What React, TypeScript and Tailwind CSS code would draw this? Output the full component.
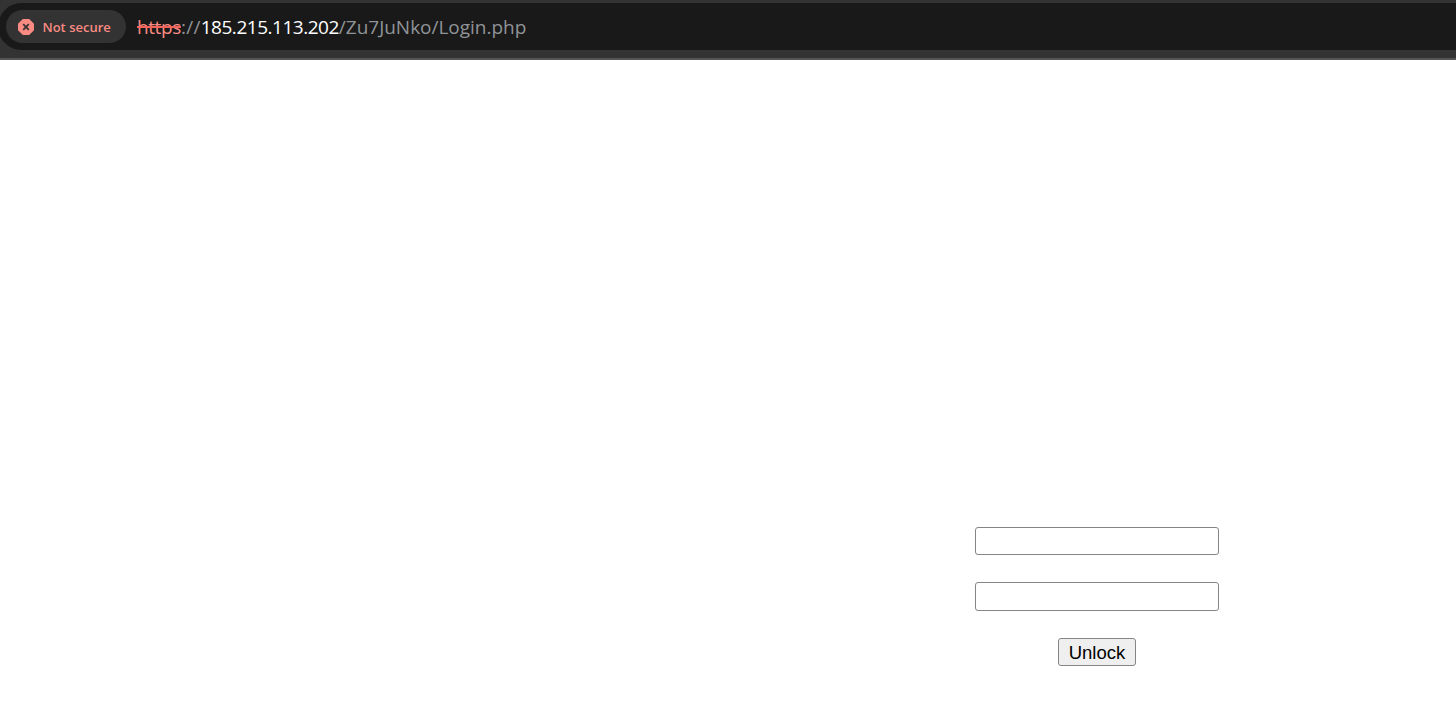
import React from 'react';

const AddressBar = () => {
  return (
    <div className="h-[60px] bg-[#333333] border-b-2 border-[#555555] pt-[3px] overflow-hidden">
      <div className="h-[47px] -ml-0.5 -mr-8 pl-2 rounded-full bg-[#191919] flex items-center">
        <div className="h-[33px] w-[120px] pl-3 rounded-full bg-[#333333] flex items-center shrink-0">
          <svg width="16" height="16" viewBox="0 0 16 16" className="shrink-0 mt-px">
            <path d="M4.8 0h6.4L16 4.8v6.4L11.2 16H4.8L0 11.2V4.8z" fill="#f98b82" />
            <path d="M5.2 5.2l5.6 5.6M10.8 5.2l-5.6 5.6" stroke="#333333" strokeWidth="1.7" />
          </svg>
          <span className="ml-[8.5px] pt-0.5 text-[13px] font-semibold text-[#f98b82] whitespace-nowrap">Not secure</span>
        </div>
        <div className="ml-[11px] pt-0.5 flex text-[19px] leading-none whitespace-nowrap text-[#909497]">
          <span className="text-[#f98b82] line-through decoration-[#f4645c] decoration-[1.5px] tracking-[-0.4px]">https</span>
          <span className="tracking-[0.3px]">://</span>
          <span className="text-white tracking-[-0.48px]">185.215.113.202</span>
          <span className="tracking-[-0.02px]">/Zu7JuNko/Login.php</span>
        </div>
      </div>
    </div>
  );
};

export default function App() {
  return (
    <div className="min-h-screen bg-white font-['Open_Sans','Noto_Sans',sans-serif]">
      <AddressBar />
      <form
        onSubmit={e => e.preventDefault()}
        className="ml-[975px] mt-[467px] w-[244px] flex flex-col items-center gap-[27px]"
      >
        <input type="text" className="w-full h-7 px-1 border border-[#858585] rounded-[3px] bg-white text-lg" />
        <input type="password" className="w-full h-[29px] px-1 border border-[#858585] rounded-[3px] bg-white text-lg" />
        <button
          type="submit"
          className="w-[78px] h-7 pt-0.5 border border-[#858585] rounded-[3px] bg-[#efefef] text-black text-[18.5px] leading-none font-['Liberation_Sans',Arial,sans-serif]"
        >
          Unlock
        </button>
      </form>
    </div>
  );
}
